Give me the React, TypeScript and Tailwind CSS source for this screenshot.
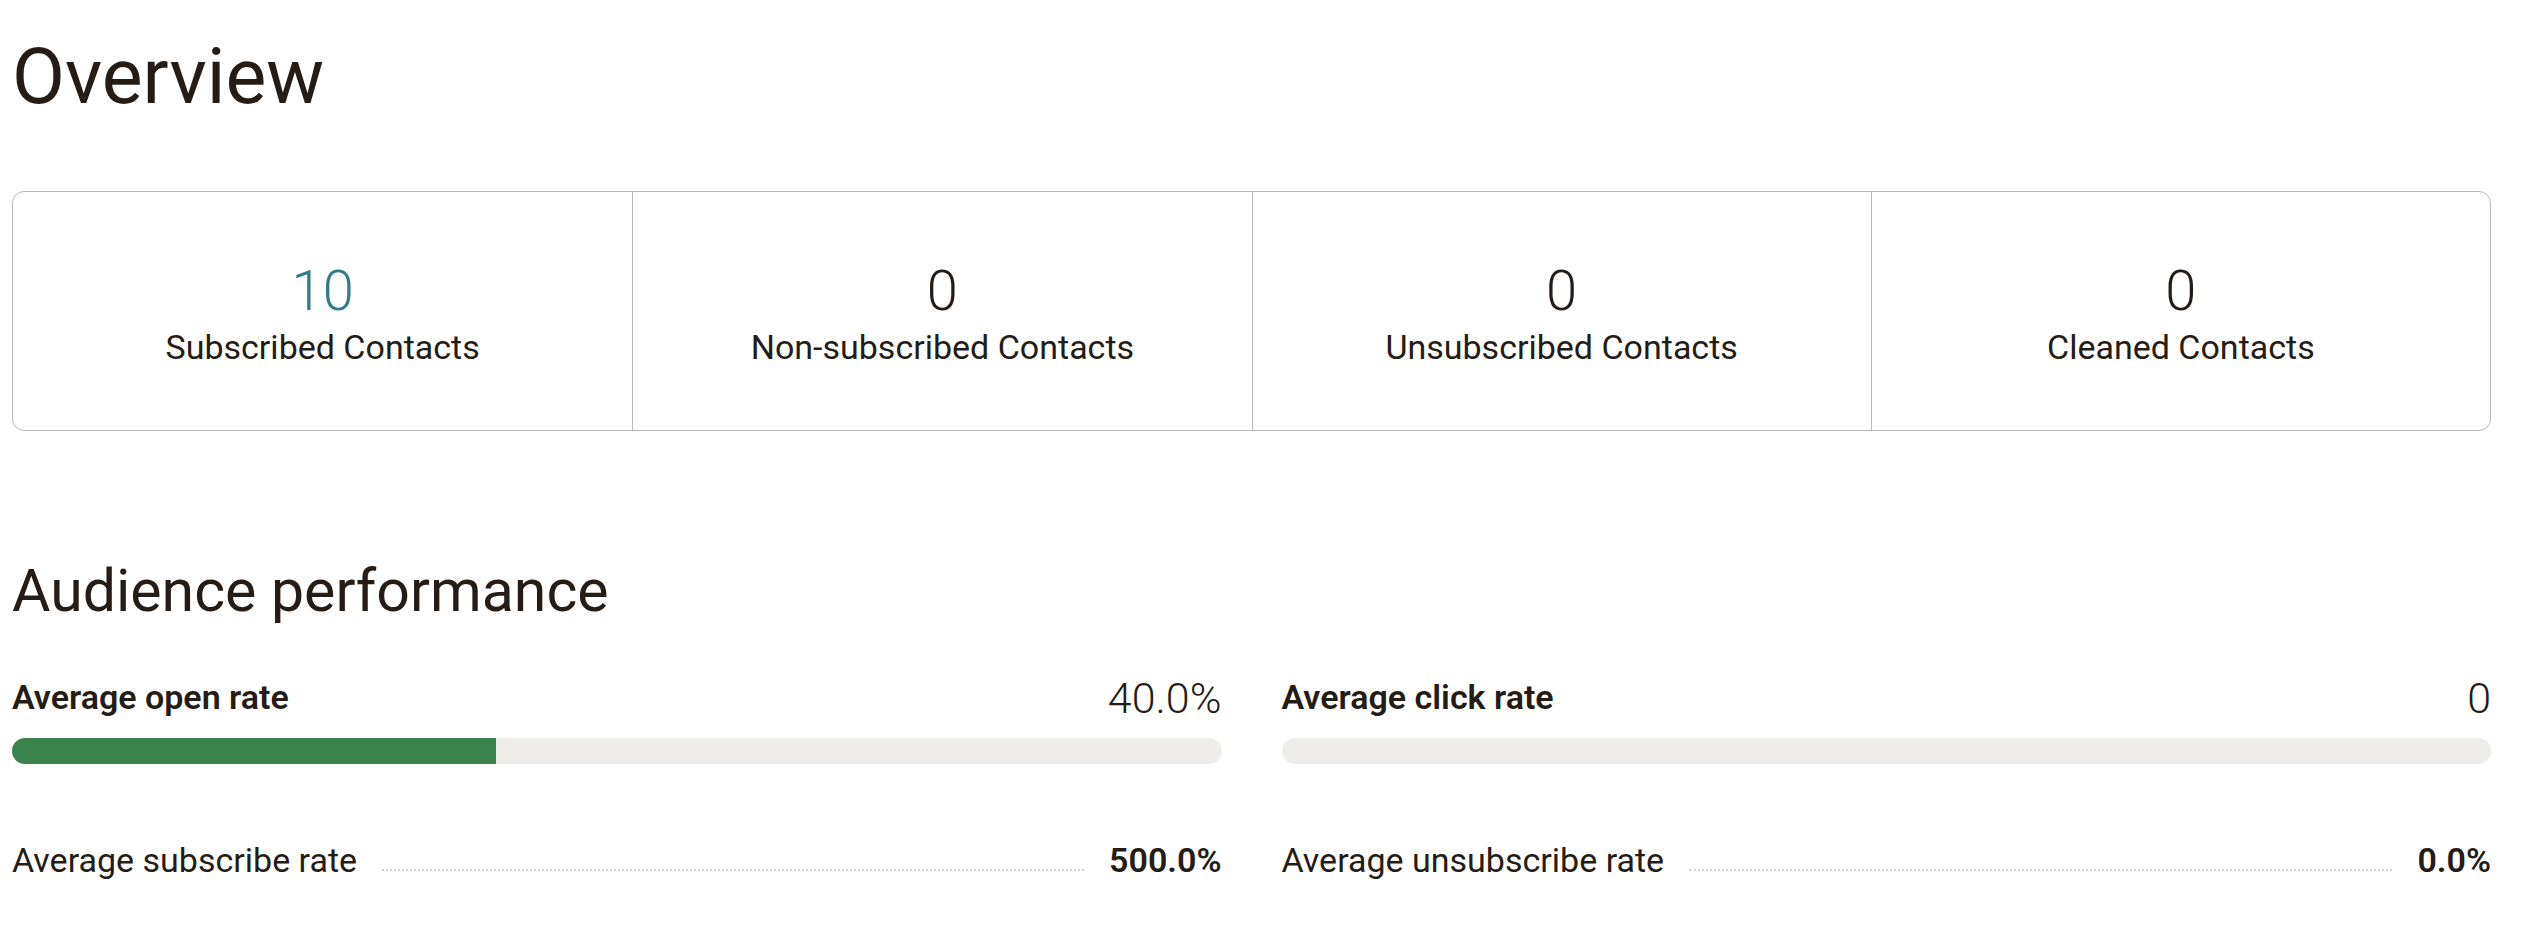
import { FC } from 'react'

const stats = [
	{ value: '10', label: 'Subscribed Contacts', accent: true },
	{ value: '0', label: 'Non-subscribed Contacts', accent: false },
	{ value: '0', label: 'Unsubscribed Contacts', accent: false },
	{ value: '0', label: 'Cleaned Contacts', accent: false },
]

const rates = [
	{ title: 'Average open rate', value: '40.0%', pct: 40, subLabel: 'Average subscribe rate', subValue: '500.0%' },
	{ title: 'Average click rate', value: '0', pct: 0, subLabel: 'Average unsubscribe rate', subValue: '0.0%' },
]

const App: FC = () => {
	return (
		<div className="min-h-screen bg-white font-['Roboto',sans-serif] text-[#241c15]">
			<div className="w-[2491px] pl-[12px]">
				<h1 className="pt-[39px] text-[77px] leading-none font-normal">Overview</h1>

				{/* contacts summary */}
				<div className="mt-[75px] h-[240px] grid grid-cols-4 border border-[#b9b9b9] rounded-[12px]">
					{stats.map((s, i) => (
						<div
							key={s.label}
							className={`flex flex-col items-center pt-[71px] ${i > 0 ? 'border-l border-[#b9b9b9]' : ''}`}
						>
							<span className={`text-[56px] leading-none font-light ${s.accent ? 'text-[#2f7d89]' : ''}`}>
								{s.value}
							</span>
							<span className="mt-[11px] text-[34px] leading-none">{s.label}</span>
						</div>
					))}
				</div>

				<h2 className="mt-[130px] text-[59px] leading-none font-normal">Audience performance</h2>

				<div className="mt-[57px] grid grid-cols-2 gap-x-[60px]">
					{rates.map((r) => (
						<div key={r.title}>
							<div className="flex items-end justify-between">
								<span className="mb-[6px] text-[34px] leading-none font-semibold">{r.title}</span>
								<span className="text-[43px] leading-none font-light">{r.value}</span>
							</div>
							<div className="mt-[18px] h-[26px] rounded-full bg-[#eeede9] overflow-hidden">
								<div className="h-full bg-[#3b834d]" style={{ width: `${r.pct}%` }} />
							</div>
							<div className="mt-[79px] flex items-end">
								<span className="text-[34px] leading-none">{r.subLabel}</span>
								<span className="flex-1 mx-[25px] mb-[6px] border-b-2 border-dotted border-[#d0d0d0]" />
								<span className="text-[34px] leading-none font-semibold">{r.subValue}</span>
							</div>
						</div>
					))}
				</div>
			</div>
		</div>
	)
}

export default App
